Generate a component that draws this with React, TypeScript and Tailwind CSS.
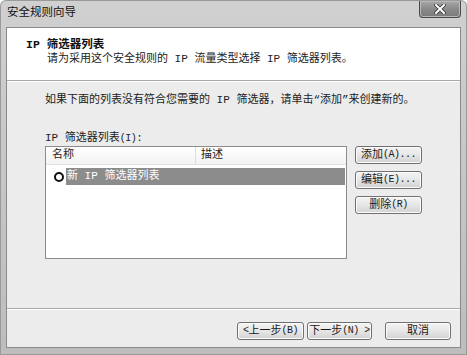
import React from "react";

const font = { fontFamily: '"Liberation Mono", "Noto Sans CJK SC", monospace' };

function Btn({ children, w }: { children: React.ReactNode; w: string }) {
  return (
    <div
      className={`${w} h-[18px] flex items-center justify-center whitespace-nowrap rounded-[3px] border border-[#707070] bg-gradient-to-b from-[#f4f4f4] via-[#e6e6e6] to-[#d2d2d2] text-[11px] leading-none text-[#1a1a1a] shadow-[inset_0_0_0_1px_#fbfbfb]`}
    >
      {children}
    </div>
  );
}

function Lat({ children }: { children: React.ReactNode }) {
  return <span className="text-[10px] tracking-[-0.5px]">{children}</span>;
}

export default function App() {
  return (
    <div
      className="w-[467px] h-[355px] bg-[#9a9a9a] p-[1px] rounded-t-[6px] overflow-hidden"
      style={font}
    >
      <div className="w-full h-full flex flex-col rounded-t-[5px] bg-gradient-to-b from-[#d0d0d0] via-[#c6c6c6] to-[#bdbdbd]">
        {/* title bar */}
        <div className="h-[26px] flex items-start relative">
          <div className="pl-[6px] pt-[6px] text-[11.5px] leading-none text-[#111]">安全规则向导</div>
          <div className="ml-auto mr-[5px] mt-0 w-[42px] h-[17px] rounded-b-[4px] border border-[#4a4a4a] border-t-0 bg-gradient-to-b from-[#a8a8a8] via-[#8a8a8a] to-[#7a7a7a] flex items-center justify-center shadow-[inset_0_0_0_1px_#b8b8b8]">
            <svg width="12" height="10" viewBox="0 0 12 10">
              <path d="M2 1 L10 9 M10 1 L2 9" stroke="#333" strokeWidth="3.6" strokeLinecap="square" />
              <path d="M2 1 L10 9 M10 1 L2 9" stroke="#fff" strokeWidth="2" strokeLinecap="square" />
            </svg>
          </div>
        </div>
        {/* content */}
        <div className="flex-1 mx-[5px] mb-[6px] border border-[#8a8a8a] flex flex-col bg-[#ececec]">
          {/* header */}
          <div className="h-[53px] bg-white border-b border-[#a8a8a8] pl-[19px] pt-[10px]">
            <div className="text-[11.5px] leading-[13px] font-bold text-[#111]">IP 筛选器列表</div>
            <div className="pl-[21px] pt-[2px] text-[11px] leading-[13px] text-[#222]">
              请为采用这个安全规则的 IP 流量类型选择 IP 筛选器列表。
            </div>
          </div>
          {/* body */}
          <div className="flex-1 border-t border-white pl-[38px] pt-[12px]">
            <div className="text-[11px] leading-[13px] text-[#222]">
              如果下面的列表没有符合您需要的 IP 筛选器，请单击“添加”来创建新的。
            </div>
            <div className="mt-[25px] text-[11px] leading-[13px] text-[#222]">
              IP 筛选器列表<Lat>(I)</Lat>:
            </div>
            <div className="mt-[1px] flex">
              <div className="w-[302px] h-[113px] bg-white border border-[#8c8c8c] flex flex-col">
                <div className="h-[18px] flex text-[11px] leading-none text-[#222] bg-gradient-to-b from-white to-[#f3f3f3] border-b border-[#e2e2e2]">
                  <div className="w-[150px] pl-[6px] flex items-center border-r border-[#dcdcdc]">名称</div>
                  <div className="pl-[5px] flex items-center">描述</div>
                </div>
                <div className="mt-[3px] h-[17px] flex items-center">
                  <div className="ml-[8px] w-[10px] h-[10px] rounded-full border-[2px] border-[#111] bg-white" />
                  <div className="ml-[2px] flex-1 mr-[1px] h-full bg-[#8c8c8c] flex items-center pl-[1px] text-[11px] leading-none text-white whitespace-nowrap">
                    新 IP 筛选器列表
                  </div>
                </div>
              </div>
              <div className="ml-[8px] flex flex-col gap-[7px]">
                <Btn w="w-[67px]">添加<Lat>(A)...</Lat></Btn>
                <Btn w="w-[67px]">编辑<Lat>(E)...</Lat></Btn>
                <Btn w="w-[67px]">删除<Lat>(R)</Lat></Btn>
              </div>
            </div>
          </div>
          {/* footer */}
          <div className="h-[39px] border-t border-[#a8a8a8] shadow-[inset_0_1px_0_#ffffff] flex items-start justify-end pr-[9px] pt-[13px]">
            <Btn w="w-[67px]"><Lat>&lt;</Lat>上一步<Lat>(B)</Lat></Btn>
            <div className="ml-[3px]">
              <Btn w="w-[65px]">下一步<Lat>(N) &gt;</Lat></Btn>
            </div>
            <div className="ml-[13px]">
              <Btn w="w-[66px]">取消</Btn>
            </div>
          </div>
        </div>
      </div>
    </div>
  );
}
